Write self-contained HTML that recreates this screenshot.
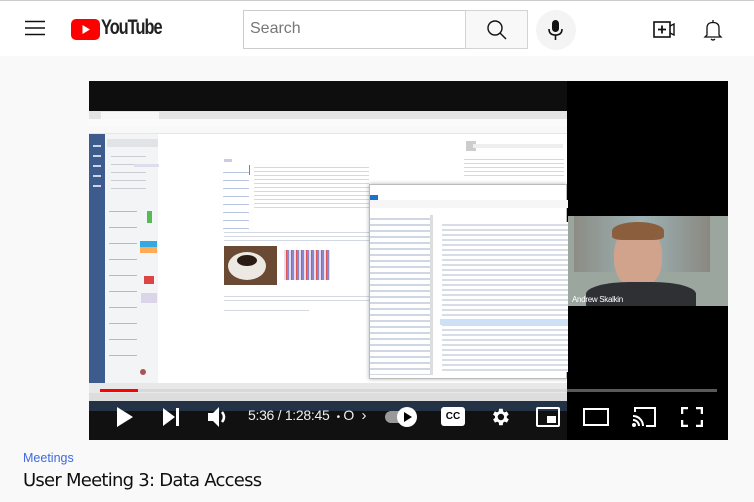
<!DOCTYPE html>
<html><head><meta charset="utf-8"><style>
*{margin:0;padding:0;box-sizing:border-box}
body{width:754px;height:502px;overflow:hidden;background:#f9f9f9;font-family:"Liberation Sans",sans-serif;position:relative}
.hdr{position:absolute;left:0;top:0;width:754px;height:56px;background:#fff;border-top:1px solid #ccc}
.a{position:absolute}
.ln{background:repeating-linear-gradient(#fff 0 3px,#d4d8e2 3px 4px)}
</style></head><body>
<div class="hdr">
  <svg class="a" style="left:25px;top:19px" width="20" height="16"><path d="M0 1.5H20M0 8H20M0 14.5H20" stroke="#111" stroke-width="1.6"/></svg>
  <svg class="a" style="left:71px;top:18px" width="29" height="21"><rect width="29" height="21" rx="5" fill="#f00"/><path d="M11.5 6L19 10.5L11.5 15Z" fill="#fff"/></svg>
  <div class="a" style="left:101px;top:15px;font-size:21px;font-weight:bold;letter-spacing:-1.3px;color:#212121;transform:scaleX(.78);transform-origin:left">YouTube</div>
  <div class="a" style="left:243px;top:9px;width:223px;height:39px;border:1px solid #ccc;border-right:none;background:#fff"></div>
  <div class="a" style="left:250px;top:19px;font-size:16px;color:#777">Search</div>
  <div class="a" style="left:465px;top:9px;width:63px;height:39px;border:1px solid #d3d3d3;background:#f8f8f8"></div>
  <svg class="a" style="left:486px;top:18px" width="22" height="22"><circle cx="9" cy="9" r="7" fill="none" stroke="#111" stroke-width="1.4"/><path d="M14 14L20 20" stroke="#111" stroke-width="1.4"/></svg>
  <div class="a" style="left:536px;top:9px;width:40px;height:40px;border-radius:50%;background:#f4f4f4"></div>
  <svg class="a" style="left:547px;top:18px" width="18" height="22"><rect x="5" y="1" width="7" height="12" rx="3.5" fill="#111"/><path d="M2 10Q2 16 8.5 16Q15 16 15 10M8.5 16V21" stroke="#111" stroke-width="1.6" fill="none"/></svg>
  <svg class="a" style="left:653px;top:19px" width="24" height="20"><rect x="1" y="2" width="16" height="15" fill="none" stroke="#111" stroke-width="1.6"/><path d="M5 9.5H13M9 5.5V13.5" stroke="#111" stroke-width="1.8"/><path d="M17 6L21 4V15L17 13" fill="none" stroke="#111" stroke-width="1.4"/></svg>
  <svg class="a" style="left:702px;top:17px" width="22" height="24"><path d="M11 2V4M5 17V10Q5 4.5 11 4.5Q17 4.5 17 10V17L19 19H3L5 17ZM9 21Q11 23 13 21" fill="none" stroke="#111" stroke-width="1.3"/></svg>
</div>

<div class="a" style="left:89px;top:81px;width:639px;height:359px;background:#000;overflow:hidden">
  <div class="a" style="left:0;top:0;width:478px;height:359px;background:#0e0e0e"></div>
  <div class="a" style="left:0;top:30px;width:478px;height:290px;background:#fff">
    <div class="a" style="left:0;top:0;width:478px;height:8px;background:#e4e4e4"></div>
    <div class="a" style="left:12px;top:1px;width:58px;height:7px;background:#f7f7f7"></div>
    <div class="a" style="left:0;top:8px;width:478px;height:8px;background:#fafafa"></div>
    <div class="a" style="left:0;top:16px;width:478px;height:7px;background:#f8f8f8;border-bottom:1px solid #e6e6e6"></div>
    <div class="a" style="left:0;top:23px;width:16px;height:250px;background:#3d5b8c"></div>
    <div class="a" style="left:4px;top:30px;width:8px;height:50px;background:repeating-linear-gradient(#3d5b8c 0 4px,#cdd6e8 4px 6px,#3d5b8c 6px 10px)"></div>
    <div class="a" style="left:16px;top:23px;width:53px;height:250px;background:#f3f4f6"></div>
    <div class="a" style="left:18px;top:28px;width:51px;height:8px;background:#e2e3e6"></div>
    <div class="a" style="left:22px;top:40px;width:35px;height:40px;background:repeating-linear-gradient(#f3f4f6 0 5px,#c9ccd3 5px 6px,#f3f4f6 6px 8px)"></div>
    <div class="a" style="left:20px;top:95px;width:28px;height:165px;background:repeating-linear-gradient(#f3f4f6 0 5px,#aebbd8 5px 6px,#f3f4f6 6px 16px)"></div>
    <div class="a" style="left:51px;top:130px;width:17px;height:12px;background:linear-gradient(#3ad 50%,#fa5 50%)"></div>
    <div class="a" style="left:58px;top:100px;width:5px;height:12px;background:#5b5"></div>
    <div class="a" style="left:55px;top:165px;width:10px;height:8px;background:#d44"></div>
    <div class="a" style="left:52px;top:182px;width:16px;height:10px;background:#dcd4e8"></div>
    <div class="a" style="left:51px;top:258px;width:6px;height:6px;background:#a55;border-radius:50%"></div>
    <div class="a" style="left:45px;top:53px;width:25px;height:3px;background:#dde"></div>
    <div class="a" style="left:135px;top:48px;width:8px;height:3px;background:#ccd"></div>
    <div class="a" style="left:135px;top:53px;width:145px;height:40px;" class="ln"></div>
    <div class="a ln" style="left:165px;top:53px;width:115px;height:45px"></div>
    <div class="a" style="left:134px;top:55px;width:26px;height:70px;background:repeating-linear-gradient(#fff 0 6px,#b8c6e2 6px 7px,#fff 7px 8px)"></div>
    <div class="a" style="left:160px;top:54px;width:1px;height:10px;background:#49c"></div>
    <div class="a ln" style="left:135px;top:118px;width:145px;height:12px"></div>
    <div class="a" style="left:135px;top:135px;width:53px;height:39px;background:#6a4a33"></div>
    <div class="a" style="left:139px;top:141px;width:38px;height:28px;border-radius:50%;background:#ece8e2"></div>
    <div class="a" style="left:148px;top:144px;width:20px;height:11px;border-radius:50%;background:#2a1c14"></div>
    <div class="a" style="left:195px;top:139px;width:46px;height:30px;background:repeating-linear-gradient(90deg,#eadcf0 0 2px,#d55 2px 3px,#88c 3px 5px)"></div>
    <div class="a ln" style="left:135px;top:182px;width:145px;height:8px"></div>
    <div class="a ln" style="left:135px;top:196px;width:85px;height:4px"></div>
    <div class="a" style="left:377px;top:30px;width:10px;height:10px;background:#ccc"></div>
    <div class="a" style="left:384px;top:33px;width:90px;height:4px;background:#eee"></div>
    <div class="a ln" style="left:375px;top:45px;width:100px;height:20px"></div>
    <div class="a" style="left:280px;top:73px;width:198px;height:195px;background:#fff;border:1px solid #bbb;box-shadow:0 0 4px rgba(0,0,0,.3)">
      <div class="a" style="left:0;top:10px;width:8px;height:5px;background:#1a73c8"></div>
      <div class="a" style="left:0;top:15px;width:198px;height:8px;background:#f6f6f6"></div>
      <div class="a" style="left:0;top:30px;width:60px;height:160px;background:repeating-linear-gradient(#fff 0 3px,#cfd6e4 3px 5px,#fff 5px 6px)"></div>
      <div class="a" style="left:60px;top:30px;width:3px;height:160px;background:#ddd"></div>
      <div class="a" style="left:72px;top:37px;width:126px;height:150px;background:repeating-linear-gradient(#fff 0 2px,#d8dce6 2px 4px,#fff 4px 5px)"></div>
      <div class="a" style="left:70px;top:134px;width:128px;height:6px;background:#cde0f5"></div>
    </div>
  </div>
  <div class="a" style="left:0;top:302px;width:478px;height:10px;background:#e8e8e8"></div>
  <div class="a" style="left:0;top:312px;width:478px;height:8px;background:#ddd"></div>
  <div class="a" style="left:0;top:320px;width:478px;height:10px;background:#233244"></div>
  <div class="a" style="left:0;top:330px;width:478px;height:29px;background:#111"></div>
  <div class="a" style="left:479px;top:135px;width:160px;height:90px;background:#9aa69e;overflow:hidden">
    <div class="a" style="left:6px;top:0;width:136px;height:56px;background:linear-gradient(90deg,#8c8c84,#9db3b6 50%,#8a8880)"></div>
    <div class="a" style="left:46px;top:10px;width:48px;height:62px;border-radius:45%;background:#d2a38c"></div>
    <div class="a" style="left:44px;top:6px;width:52px;height:18px;border-radius:50% 50% 20% 20%;background:#8b5f3e"></div>
    <div class="a" style="left:18px;top:66px;width:110px;height:30px;border-radius:40% 40% 0 0;background:#2e3033"></div>
    <div class="a" style="left:4px;top:79px;font-size:8px;color:#fff;letter-spacing:-.3px">Andrew Skalkin</div>
  </div>
  <div class="a" style="left:11px;top:308px;width:617px;height:3px;background:rgba(200,200,200,.45)"></div>
  <div class="a" style="left:11px;top:308px;width:38px;height:3px;background:#f00"></div>
  <svg class="a" style="left:27px;top:326px" width="18" height="20"><path d="M1 0L17 10L1 20Z" fill="#fff"/></svg>
  <svg class="a" style="left:73px;top:327px" width="18" height="18"><path d="M1 0L13 9L1 18Z" fill="#fff"/><rect x="14" y="0" width="3" height="18" fill="#fff"/></svg>
  <svg class="a" style="left:118px;top:325px" width="22" height="22"><path d="M1 7H6L12 1V21L6 15H1Z" fill="#fff"/><path d="M15 6Q19 11 15 16" stroke="#fff" stroke-width="2.5" fill="none"/></svg>
  <div class="a" style="left:159px;top:326px;font-size:14px;color:#eee;letter-spacing:-.3px">5:36 / 1:28:45 &nbsp;<span style="font-size:10px">•</span> O <span style="font-size:15px">&nbsp;›</span></div>
  <div class="a" style="left:296px;top:330px;width:24px;height:12px;border-radius:6px;background:#999"></div>
  <div class="a" style="left:308px;top:326px;width:20px;height:20px;border-radius:50%;background:#fff"></div>
  <svg class="a" style="left:315px;top:331px" width="8" height="10"><path d="M0 0L8 5L0 10Z" fill="#000"/></svg>
  <div class="a" style="left:352px;top:326px;width:24px;height:19px;border-radius:3px;background:#fff;font-size:10px;font-weight:bold;color:#000;text-align:center;line-height:19px">CC</div>
  <svg class="a" style="left:400px;top:325px" width="22" height="22" viewBox="0 0 24 24"><path fill="#fff" d="M19.4 13a7.5 7.5 0 000-2l2.1-1.6-2-3.5-2.5 1a7 7 0 00-1.7-1L15 3h-4l-.4 2.9a7 7 0 00-1.7 1l-2.5-1-2 3.5L6.6 11a7.5 7.5 0 000 2l-2.1 1.6 2 3.5 2.5-1a7 7 0 001.7 1L11 21h4l.4-2.9a7 7 0 001.7-1l2.5 1 2-3.5zM13 15.5a3.5 3.5 0 110-7 3.5 3.5 0 010 7z"/></svg>
  <svg class="a" style="left:447px;top:326px" width="24" height="20"><rect x="1" y="1" width="22" height="18" rx="1" fill="none" stroke="#fff" stroke-width="2"/><rect x="11" y="9" width="9" height="7" fill="#fff"/></svg>
  <svg class="a" style="left:494px;top:327px" width="26" height="18"><rect x="1" y="1" width="24" height="16" fill="none" stroke="#fff" stroke-width="2"/></svg>
  <svg class="a" style="left:542px;top:325px" width="26" height="22"><path d="M4 6V2H24V20H15" fill="none" stroke="#fff" stroke-width="2"/><path d="M2 10A10 10 0 0112 20M2 14A6 6 0 018 20" fill="none" stroke="#fff" stroke-width="2"/><circle cx="3" cy="19" r="2" fill="#fff"/></svg>
  <svg class="a" style="left:592px;top:326px" width="22" height="20"><path d="M1 7V1H7M15 1H21V7M21 13V19H15M7 19H1V13" fill="none" stroke="#fff" stroke-width="2.5"/></svg>
</div>

<div class="a" style="left:23px;top:451px;font-size:12.5px;color:#3e6ae1">Meetings</div>
<div class="a" style="left:23px;top:470px;font-size:18px;color:#0f0f0f;font-family:'DejaVu Sans',sans-serif;letter-spacing:-.75px">User Meeting 3: Data Access</div>
</body></html>
